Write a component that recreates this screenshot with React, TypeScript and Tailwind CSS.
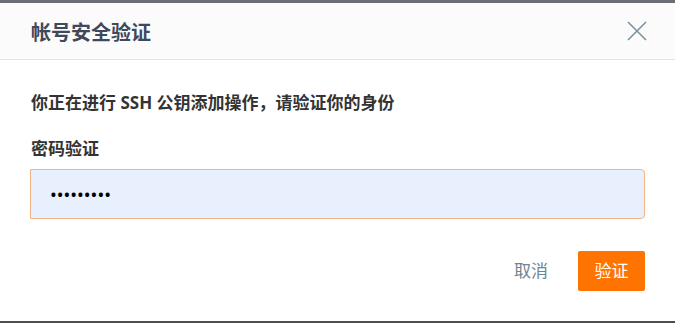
import React from 'react';

const font = { fontFamily: '"Noto Sans", "Noto Sans CJK SC", sans-serif' };

export default function App() {
  return (
    <div className="w-[675px] h-[323px] flex flex-col bg-white overflow-hidden" style={font}>
      <div className="h-[3px] bg-[#6b6d77]" />
      <div className="h-[57px] flex items-center justify-between pl-[31px] pr-[28px] pt-[3px] bg-[#fbfbfb] border-b border-[#e4e4e4]">
        <span className="text-[20px] font-bold text-[#40485b] leading-none">帐号安全验证</span>
        <button className="w-[20px] h-[20px] -mt-[3px]" aria-label="close">
          <svg width="20" height="20" viewBox="0 0 20 20" fill="none">
            <path d="M1 1 L19 19 M19 1 L1 19" stroke="#7d919d" strokeWidth="1.6" />
          </svg>
        </button>
      </div>
      <div className="flex-1 flex flex-col px-[30px]">
        <p className="mt-[31px] pl-[1px] text-[17px] leading-[24px] font-bold text-[#333333]">
          你正在进行 SSH 公钥添加操作，请验证你的身份
        </p>
        <label className="mt-[22px] pl-[1px] text-[17px] leading-[24px] font-bold text-[#333333]">密码验证</label>
        <input
          type="password"
          readOnly
          value="123456789"
          className="mt-[8px] h-[50px] w-full rounded-r-[4px] border border-[#f3b587] bg-[#e8f0fe] pl-[19px] text-[18px] text-black outline-none"
        />
        <div className="mt-[32px] flex items-center justify-end gap-[30px]">
          <button className="text-[17px] text-[#6a8595]">取消</button>
          <button className="w-[67px] h-[40px] rounded-[2px] bg-[#ff7300] text-white text-[17px]">验证</button>
        </div>
      </div>
      <div className="h-[2px] bg-[#4b4d52]" />
    </div>
  );
}
